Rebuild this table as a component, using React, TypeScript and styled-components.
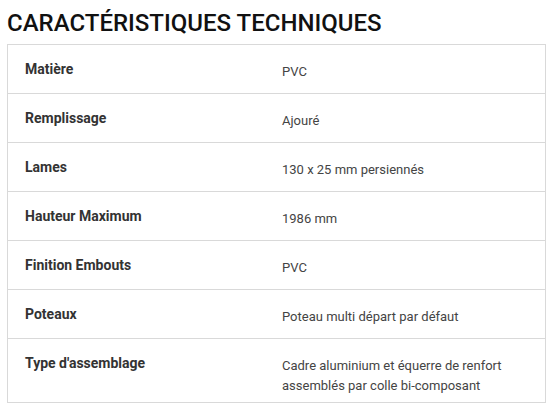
import styled, { createGlobalStyle } from "styled-components";

type Spec = {
  label: string;
  value: string;
};

const specs: Spec[] = [
  { label: "Matière", value: "PVC" },
  { label: "Remplissage", value: "Ajouré" },
  { label: "Lames", value: "130 x 25 mm persiennés" },
  { label: "Hauteur Maximum", value: "1986 mm" },
  { label: "Finition Embouts", value: "PVC" },
  { label: "Poteaux", value: "Poteau multi départ par défaut" },
  {
    label: "Type d'assemblage",
    value: "Cadre aluminium et équerre de renfort assemblés par colle bi-composant",
  },
];

const App = () => {
  return (
    <>
      <GlobalStyle />
      <Page>
        <Title>CARACTÉRISTIQUES TECHNIQUES</Title>
        <Table>
          {specs.map((spec) => (
            <Row key={spec.label}>
              <Label>{spec.label}</Label>
              <Value>{spec.value}</Value>
            </Row>
          ))}
        </Table>
      </Page>
    </>
  );
};

export default App;

const GlobalStyle = createGlobalStyle`
  * {
    box-sizing: border-box;
  }

  body {
    margin: 0;
    background: #fff;
    font-family: Roboto, "Liberation Sans", sans-serif;
  }
`;

const Page = styled.div`
  padding: 9px 8px 0 7px;
`;

const Title = styled.h2`
  margin: 0 0 7px;
  font-size: 24px;
  font-weight: 500;
  line-height: 28px;
  color: #111;
`;

const Table = styled.div`
  border: 1px solid #d9d9d9;
  border-bottom: none;
`;

const Row = styled.div`
  display: grid;
  grid-template-columns: 257px 1fr;
  align-items: start;
  border-bottom: 1px solid #d9d9d9;
`;

const Label = styled.div`
  padding: 15px 17px;
  font-size: 14px;
  font-weight: 700;
  line-height: 18px;
  color: #333;
`;

const Value = styled.div`
  padding: 17px 40px 7px 17px;
  font-size: 13px;
  line-height: 19.5px;
  color: #444;
`;
